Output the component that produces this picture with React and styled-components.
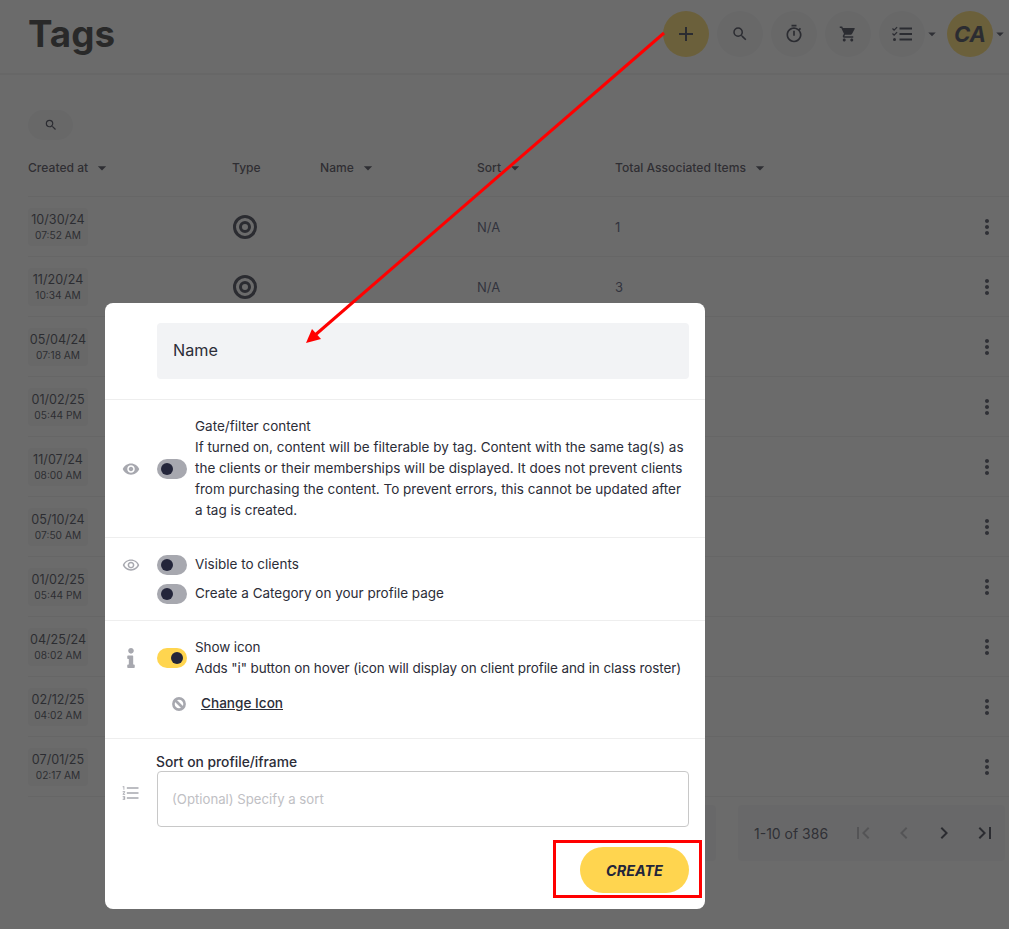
import React from 'react';
import styled, { createGlobalStyle } from 'styled-components';
import {
  MdAdd,
  MdSearch,
  MdOutlineTimer,
  MdShoppingCart,
  MdArrowDropDown,
  MdFirstPage,
  MdLastPage,
  MdChevronLeft,
  MdChevronRight,
  MdMoreVert,
  MdRemoveRedEye,
  MdOutlineRemoveRedEye,
  MdFormatListNumbered,
} from 'react-icons/md';
import { FaInfo } from 'react-icons/fa';

const rows = [
  { date: '10/30/24', time: '07:52 AM', sort: 'N/A', total: '1' },
  { date: '11/20/24', time: '10:34 AM', sort: 'N/A', total: '3' },
  { date: '05/04/24', time: '07:18 AM' },
  { date: '01/02/25', time: '05:44 PM' },
  { date: '11/07/24', time: '08:00 AM' },
  { date: '05/10/24', time: '07:50 AM' },
  { date: '01/02/25', time: '05:44 PM' },
  { date: '04/25/24', time: '08:02 AM' },
  { date: '02/12/25', time: '04:02 AM' },
  { date: '07/01/25', time: '02:17 AM' },
];

const GlobalStyle = createGlobalStyle`
  html, body {
    margin: 0;
    padding: 0;
    background: #fff;
    font-family: Inter, "Liberation Sans", sans-serif;
    color: #23253a;
  }
`;

const Page = styled.div`
  position: relative;
  width: 1009px;
  height: 929px;
  overflow: hidden;
  background: #fff;
`;

const Header = styled.header`
  height: 62px;
  border-bottom: 2px solid #f0f0f0;
  padding: 11px 2px 0 28px;
  display: flex;
  justify-content: space-between;
  align-items: flex-start;
`;

const Title = styled.h1`
  margin: 0;
  font-size: 36.8px;
  line-height: 46px;
  font-weight: 700;
  color: #0c0c0c;
`;

const Actions = styled.div`
  display: flex;
  align-items: center;
  gap: 8px;
`;

const Round = styled.button`
  width: 46px;
  height: 46px;
  padding: 0;
  border: 0;
  border-radius: 50%;
  display: flex;
  align-items: center;
  justify-content: center;
  color: #15172a;
  background: ${(p) => (p.$accent ? '#ffd54f' : '#f2f3f5')};
  font: italic 700 22px Inter, "Liberation Sans", sans-serif;
`;

const Caret = styled.span`
  display: flex;
  width: 14px;
  margin-left: -8px;
  justify-content: center;
  color: #23253a;

  svg {
    flex: none;
  }
`;

const SearchPill = styled.div`
  width: 45px;
  height: 30px;
  margin: 35px 0 0 28px;
  border-radius: 15px;
  background: #f2f3f5;
  display: flex;
  align-items: center;
  justify-content: center;
  color: #15172a;
`;

const HeadRow = styled.div`
  height: 57px;
  padding-bottom: 1px;
  margin: 0 0 0 28px;
  display: grid;
  grid-template-columns: 204px 88px 157px 138px 1fr;
  align-items: center;
  border-bottom: 1px solid #ececec;
  box-sizing: border-box;
  font-size: 12.1px;
  font-weight: 500;
  color: #1f2030;
`;

const HeadCell = styled.div`
  display: flex;
  align-items: center;
  gap: 4px;
`;

const Row = styled.div`
  height: 60px;
  margin-left: 28px;
  display: grid;
  grid-template-columns: 204px 88px 157px 138px 1fr 44px;
  align-items: center;
  border-bottom: 1px solid #ececec;
  box-sizing: border-box;
  font-size: 13px;
  color: #2e3358;
`;

const DateChip = styled.div`
  width: 60px;
  height: 38px;
  border-radius: 4px;
  background: #f2f3f5;
  display: flex;
  flex-direction: column;
  align-items: center;
  justify-content: center;
  color: #15172a;
  font-size: 12.6px;
  line-height: 16px;
`;

const TimeText = styled.span`
  font-size: 10.2px;
  line-height: 14px;
`;

const Kebab = styled.div`
  display: flex;
  justify-content: center;
  color: #23253a;
`;

const Footer = styled.div`
  display: flex;
  justify-content: flex-end;
  gap: 22px;
  margin: 8px 4px 0 0;
`;

const FooterBox = styled.div`
  height: 56px;
  width: 200px;
  border-radius: 4px;
  background: #f4f5f6;
  display: flex;
  align-items: center;
  font-size: 14px;
  color: #23253a;
`;

const Pager = styled(FooterBox)`
  width: 267px;
  padding-left: 16px;
  box-sizing: border-box;
`;

const PagerLabel = styled.span`
  width: 90px;
`;

const PagerIcon = styled.span`
  width: 41px;
  display: flex;
  justify-content: center;
  color: ${(p) => (p.$off ? '#a9aab0' : '#15172a')};
`;

const Overlay = styled.div`
  position: absolute;
  inset: 0;
  background: rgba(52, 52, 52, 0.73);
`;

const Modal = styled.div`
  position: absolute;
  left: 105px;
  top: 303px;
  width: 600px;
  height: 606px;
  background: #fff;
  border-radius: 8px;
  font-size: 13.5px;
  line-height: 21px;
  color: #2c2d38;
`;

const Section = styled.section`
  display: grid;
  grid-template-columns: 52px 1fr;
  padding: ${(p) => p.$pad || '16px 16px 16px 0'};
  border-bottom: ${(p) => (p.$last ? '0' : '1px solid #eeeeee')};
  box-sizing: border-box;
  height: ${(p) => p.$h}px;
`;

const IconCol = styled.div`
  display: flex;
  justify-content: center;
  align-items: ${(p) => (p.$center ? 'center' : 'flex-start')};
  padding-top: ${(p) => p.$top || 0}px;
  color: #a7a8af;
`;

const NameInput = styled.div`
  height: 56px;
  background: #f2f3f5;
  border-radius: 4px;
  display: flex;
  align-items: center;
  padding: 0 0 2px 16px;
  box-sizing: border-box;
  font-size: 16.2px;
  color: #2c2d38;
`;

const ToggleRow = styled.div`
  display: flex;
  align-items: center;
  gap: 8px;
  margin-bottom: ${(p) => p.$mb || 0}px;
`;

const Toggle = styled.span`
  flex: none;
  width: 30px;
  height: 20px;
  border-radius: 10px;
  background: ${(p) => (p.$on ? '#ffd54f' : '#a7a8af')};
  display: flex;
  align-items: center;
  justify-content: ${(p) => (p.$on ? 'flex-end' : 'flex-start')};
  padding: 0 4px;
  box-sizing: border-box;

  &::after {
    content: '';
    width: 12px;
    height: 12px;
    border-radius: 50%;
    background: #23253a;
  }
`;

const Copy = styled.div`
  flex: 1;
  white-space: ${(p) => (p.$tight ? 'nowrap' : 'normal')};
  letter-spacing: ${(p) => (p.$tight ? '-0.1px' : '0')};
`;

const ChangeIcon = styled.div`
  display: flex;
  align-items: center;
  gap: 15px;
  margin: 14px 0 0 15px;
  color: #a7a8af;
`;

const ChangeLink = styled.a`
  color: #2c2d38;
  font-weight: 500;
  font-size: 13.6px;
  text-decoration: underline;
`;

const SortLabel = styled.div`
  font-weight: 500;
  font-size: 13.8px;
  line-height: 16px;
  margin-left: -1px;
  color: #2c2d38;
`;

const SortInput = styled.div`
  height: 56px;
  margin-top: 1px;
  border: 1px solid #c8c8c8;
  border-radius: 4px;
  box-sizing: border-box;
  display: flex;
  align-items: center;
  padding-left: 14px;
  font-size: 13.2px;
  color: #c0c0c4;
`;

const CreateRow = styled.div`
  display: flex;
  justify-content: flex-end;
  margin-top: 20px;
`;

const CreateButton = styled.button`
  width: 109px;
  height: 46px;
  border: 0;
  border-radius: 23px;
  background: #ffd54f;
  color: #23253a;
  font: italic 700 14.4px Inter, "Liberation Sans", sans-serif;
`;

const Highlight = styled.div`
  position: absolute;
  left: 553px;
  top: 840px;
  width: 149px;
  height: 58px;
  box-sizing: border-box;
  border: 3px solid #f00;
`;

const ArrowLayer = styled.svg`
  position: absolute;
  inset: 0;
  pointer-events: none;
`;

function TargetIcon() {
  return (
    <svg width="26" height="26" viewBox="0 0 26 26" fill="none" stroke="#15172a" strokeWidth="3">
      <circle cx="13" cy="13" r="10.5" />
      <circle cx="13" cy="13" r="4.5" />
    </svg>
  );
}

function TaskListIcon() {
  return (
    <svg width="20" height="16" viewBox="0 0 20 16" fill="none" stroke="#15172a" strokeWidth="2">
      <path d="M0.5 2.5l1.6 1.6 3-3M0.5 7.5l1.6 1.6 3-3" strokeWidth="1.3" />
      <circle cx="2.5" cy="13.5" r="1.5" fill="#15172a" stroke="none" />
      <path d="M7.5 2.5H20M7.5 8H20M7.5 13.5H20" />
    </svg>
  );
}

function BanIcon() {
  return (
    <svg width="14" height="14" viewBox="0 0 14 14" fill="none" stroke="#a7a8af" strokeWidth="2.6">
      <circle cx="7" cy="7" r="5.6" />
      <path d="M3 3l8 8" />
    </svg>
  );
}

export default function App() {
  return (
    <Page>
      <GlobalStyle />
      <Header>
        <Title>Tags</Title>
        <Actions>
          <Round $accent><MdAdd size={24} /></Round>
          <Round><MdSearch size={18} /></Round>
          <Round><MdOutlineTimer size={20} /></Round>
          <Round><MdShoppingCart size={18} /></Round>
          <Round><TaskListIcon /></Round>
          <Caret><MdArrowDropDown size={18} /></Caret>
          <Round $accent>CA</Round>
          <Caret><MdArrowDropDown size={18} /></Caret>
        </Actions>
      </Header>

      <SearchPill><MdSearch size={14} /></SearchPill>

      <HeadRow>
        <HeadCell>Created at <MdArrowDropDown size={20} /></HeadCell>
        <HeadCell>Type</HeadCell>
        <HeadCell>Name <MdArrowDropDown size={20} /></HeadCell>
        <HeadCell>Sort <MdArrowDropDown size={20} /></HeadCell>
        <HeadCell>Total Associated Items <MdArrowDropDown size={20} /></HeadCell>
      </HeadRow>

      {rows.map((r, i) => (
        <Row key={i}>
          <DateChip>
            {r.date}
            <TimeText>{r.time}</TimeText>
          </DateChip>
          <TargetIcon />
          <span />
          <span>{r.sort}</span>
          <span>{r.total}</span>
          <Kebab><MdMoreVert size={24} /></Kebab>
        </Row>
      ))}

      <Footer>
        <FooterBox />
        <Pager>
          <PagerLabel>1-10 of 386</PagerLabel>
          <PagerIcon $off><MdFirstPage size={24} /></PagerIcon>
          <PagerIcon $off><MdChevronLeft size={24} /></PagerIcon>
          <PagerIcon><MdChevronRight size={24} /></PagerIcon>
          <PagerIcon><MdLastPage size={24} /></PagerIcon>
        </Pager>
      </Footer>

      <Overlay />

      <Modal>
        <Section $h={97} $pad="20px 16px 20px 0">
          <span />
          <NameInput>Name</NameInput>
        </Section>

        <Section $h={138}>
          <IconCol $center><MdRemoveRedEye size={18} /></IconCol>
          <ToggleRow>
            <Toggle />
            <Copy>
              Gate/filter content
              <br />
              If turned on, content will be filterable by tag. Content with the same tag(s) as the clients or their memberships will be displayed. It does not prevent clients from purchasing the content. To prevent errors, this cannot be updated after a tag is created.
            </Copy>
          </ToggleRow>
        </Section>

        <Section $h={83}>
          <IconCol $top={2}><MdOutlineRemoveRedEye size={18} /></IconCol>
          <div>
            <ToggleRow $mb={8}>
              <Toggle />
              <Copy>Visible to clients</Copy>
            </ToggleRow>
            <ToggleRow>
              <Toggle />
              <Copy>Create a Category on your profile page</Copy>
            </ToggleRow>
          </div>
        </Section>

        <Section $h={118}>
          <IconCol $top={11}><FaInfo size={20} /></IconCol>
          <div>
            <ToggleRow>
              <Toggle $on />
              <Copy $tight>
                Show icon
                <br />
                Adds "i" button on hover (icon will display on client profile and in class roster)
              </Copy>
            </ToggleRow>
            <ChangeIcon>
              <BanIcon />
              <ChangeLink>Change Icon</ChangeLink>
            </ChangeIcon>
          </div>
        </Section>

        <Section $h={170} $last $pad="15px 16px 16px 0">
          <IconCol $top={29}><MdFormatListNumbered size={20} /></IconCol>
          <div>
            <SortLabel>Sort on profile/iframe</SortLabel>
            <SortInput>(Optional) Specify a sort</SortInput>
            <CreateRow>
              <CreateButton>CREATE</CreateButton>
            </CreateRow>
          </div>
        </Section>
      </Modal>

      <ArrowLayer width="1009" height="929" viewBox="0 0 1009 929">
        <path d="M664 33L314 336" stroke="#f00" strokeWidth="3" fill="none" />
        <path d="M306 343l6-14 9 10z" fill="#f00" />
      </ArrowLayer>
      <Highlight />
    </Page>
  );
}
